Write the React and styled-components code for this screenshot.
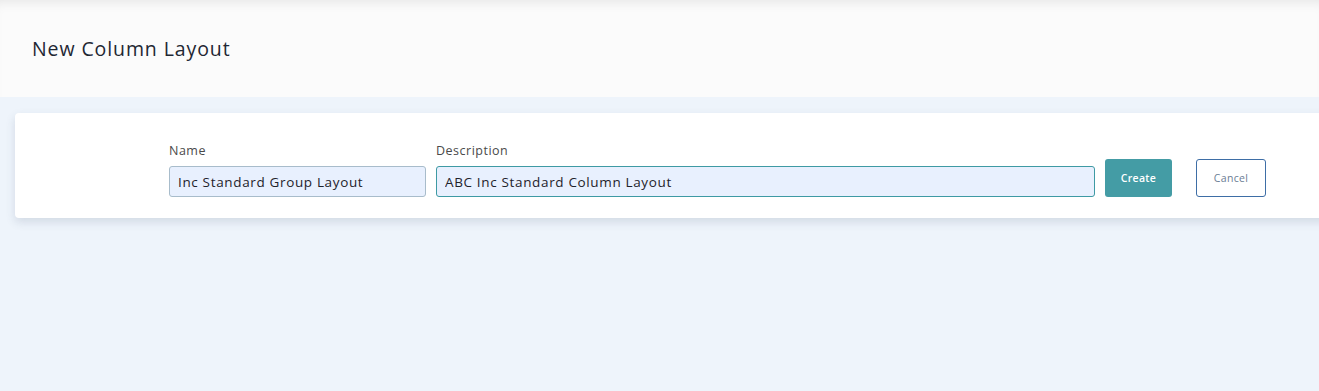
import {styled, createGlobalStyle} from "styled-components";

const GlobalStyle = createGlobalStyle`
  html, body {
    margin: 0;
    padding: 0;
    background: #eef4fb;
    font-family: "Open Sans", "Liberation Sans", sans-serif;
    overflow: hidden;
  }
`;

const Field = ({label, value, width, focused}) => (
  <FieldBox $width={width}>
    <Label>{label}</Label>
    <Input defaultValue={value} $focused={focused} />
  </FieldBox>
);

const App = () => {
  return (
    <Page>
      <GlobalStyle />
      <Header>
        <Title>New Column Layout</Title>
      </Header>
      <Body>
        <Card>
          <Form>
            <Field label="Name" value="Inc Standard Group Layout" width={257} />
            <Field label="Description" value="ABC Inc Standard Column Layout" width={659} focused />
            <PrimaryButton>Create</PrimaryButton>
            <OutlineButton>Cancel</OutlineButton>
          </Form>
        </Card>
      </Body>
    </Page>
  );
};

export default App;

const Page = styled.div`
  width: 1319px;
  height: 391px;
  background: #eef4fb;
  overflow: hidden;
`

const Header = styled.header`
  height: 97px;
  box-sizing: border-box;
  padding-left: 32px;
  display: flex;
  align-items: center;
  background: #fbfbfb;
  box-shadow: inset 0 10px 12px -8px rgba(0, 0, 0, 0.09);
`

const Title = styled.h1`
  margin: 0;
  font-size: 19.5px;
  font-weight: 400;
  color: #1f2733;
  letter-spacing: 0.9px;
`

const Body = styled.main`
  padding: 16px 0 0 15px;
`

const Card = styled.section`
  width: 1340px;
  height: 105px;
  box-sizing: border-box;
  background: #fff;
  border-radius: 4px;
  box-shadow: 0 4px 10px rgba(60, 80, 110, 0.16);
  padding: 29px 0 0 154px;
`

const Form = styled.div`
  display: flex;
  align-items: flex-end;
  gap: 10px;
`

const FieldBox = styled.div`
  width: ${({$width}) => $width}px;
  display: flex;
  flex-direction: column;
  gap: 7px;
`

const Label = styled.label`
  font-size: 12.5px;
  color: #4a4a4a;
  line-height: 17px;
  letter-spacing: 0.5px;
`

const Input = styled.input`
  height: 31px;
  box-sizing: border-box;
  border: 1px solid ${({$focused}) => ($focused ? "#3e9aa4" : "#a8bccb")};
  border-radius: 3px;
  background: #e8f0fe;
  padding: 0 8px;
  font-family: inherit;
  font-size: 13.5px;
  letter-spacing: 0.65px;
  color: #1e232b;
  outline: none;
`

const ButtonBase = styled.button`
  height: 38px;
  border-radius: 3px;
  font-family: inherit;
  font-size: 10.5px;
  letter-spacing: 0.3px;
  cursor: pointer;
`

const PrimaryButton = styled(ButtonBase)`
  width: 67px;
  border: none;
  background: #449ca5;
  color: #fff;
  font-weight: 600;
`

const OutlineButton = styled(ButtonBase)`
  width: 70px;
  margin-left: 14px;
  border: 1px solid #3e6ea6;
  background: #fff;
  color: #6b7d94;
`
